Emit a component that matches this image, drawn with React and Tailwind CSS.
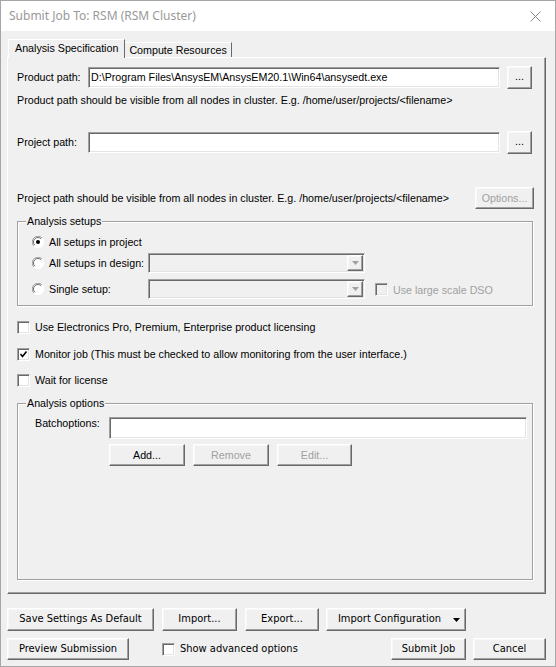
import React from "react";

// classic 3D edges
const raised =
  "bg-[#f0f0f0] border border-t-white border-l-white border-b-[#696969] border-r-[#696969] shadow-[inset_-1px_-1px_0_#a0a0a0,inset_1px_1px_0_#f8f8f8]";
const sunken =
  "border border-t-[#a0a0a0] border-l-[#a0a0a0] border-b-white border-r-white shadow-[inset_1px_1px_0_#696969,inset_-1px_-1px_0_#e3e3e3]";
const etched =
  "border border-[#a0a0a0] shadow-[inset_1px_1px_0_#ffffff,1px_1px_0_#ffffff]";

const Button = ({ children, className = "", disabled, tahoma }) => (
  <button
    className={`${raised} ${className} flex items-center justify-center ${
      disabled ? "text-[#a0a0a0]" : "text-black"
    } ${tahoma ? "font-['DejaVu_Sans_Condensed','DejaVu_Sans',sans-serif] text-[11px]" : ""}`}
  >
    {children}
  </button>
);

const Radio = ({ checked }) => (
  <svg width="12" height="12" viewBox="0 0 12 12" className="shrink-0">
    <circle cx="6" cy="6" r="5.5" fill="#ffffff" />
    <path d="M1.9 10.1 A5.6 5.6 0 0 1 10.1 1.9" fill="none" stroke="#a0a0a0" strokeWidth="1" />
    <path d="M2.8 9.2 A4.5 4.5 0 0 1 9.2 2.8" fill="none" stroke="#696969" strokeWidth="1" />
    <path d="M10.1 1.9 A5.6 5.6 0 0 1 1.9 10.1" fill="none" stroke="#ffffff" strokeWidth="1" />
    {checked && <circle cx="6" cy="6" r="2" fill="#000000" />}
  </svg>
);

const Check = ({ checked, disabled }) => (
  <div
    className={`w-[13px] h-[13px] shrink-0 ${sunken} ${
      disabled ? "bg-[#f0f0f0]" : "bg-white"
    } flex items-center justify-center`}
  >
    {checked && (
      <svg width="9" height="9" viewBox="0 0 9 9">
        <polyline points="1.5,4 3.5,6.5 7.5,1.5" fill="none" stroke="#000" strokeWidth="1.6" />
      </svg>
    )}
  </div>
);

const Combo = () => (
  <div className={`w-[217px] h-[20px] bg-[#f0f0f0] ${sunken} flex justify-end p-[1px]`}>
    <div className={`w-[16px] h-full ${raised} flex items-center justify-center`}>
      <svg width="7" height="4" viewBox="0 0 7 4">
        <polygon points="0,0 7,0 3.5,4" fill="#a0a0a0" />
      </svg>
    </div>
  </div>
);

const Group = ({ label, className = "", children }) => (
  <div className={`relative ${etched} ${className}`}>
    <span className="absolute -top-[8px] left-[8px] bg-[#f0f0f0] px-[1px] leading-[14px]">
      {label}
    </span>
    {children}
  </div>
);

export default function App() {
  return (
    <div className="w-[556px] h-[667px] border border-[#a6a6a6] bg-[#f0f0f0] flex flex-col font-['Liberation_Sans',Arial,sans-serif] text-[10.7px] text-black overflow-hidden">
      {/* title bar */}
      <div className="h-[30px] bg-white flex items-center justify-between pl-[8px] pr-[14px] shrink-0">
        <span className="font-['Noto_Sans',sans-serif] text-[12px] text-[#999999]">
          Submit Job To: RSM (RSM Cluster)
        </span>
        <svg width="11" height="11" viewBox="0 0 11 11">
          <path d="M0.5 0.5 L10.5 10.5 M10.5 0.5 L0.5 10.5" stroke="#8a8a8a" strokeWidth="1" />
        </svg>
      </div>

      <div className="flex flex-col pl-[6px] pr-[9px] pt-[8px]">
        {/* tabs */}
        <div className="h-[19px] -mb-px flex items-end pl-[1px] relative z-10">
          <div className="h-[19px] px-[6px] bg-[#f0f0f0] border-t border-l border-r border-t-white border-l-white border-r-[#696969] flex items-center pb-[1px]">
            Analysis Specification
          </div>
          <div className="h-[15px] px-[4px] border-t border-r border-t-white border-r-[#696969] flex items-center mb-px mt-auto leading-none pt-[1px]">
            Compute Resources
          </div>
        </div>

        {/* tab page */}
        <div className="w-[539px] h-[537px] border border-t-white border-l-white border-b-[#696969] border-r-[#696969] shadow-[inset_-1px_-1px_0_#a0a0a0] pl-[9px] pr-[11px] flex flex-col">
          <div className="mt-[8px] h-[23px] flex items-center">
            <span className="w-[71px]">Product path:</span>
            <div className={`w-[412px] h-[21px] bg-white ${sunken} flex items-center px-[2px]`}>
              D:\Program Files\AnsysEM\AnsysEM20.1\Win64\ansysedt.exe
            </div>
            <Button className="ml-[7px] w-[25px] h-[23px] pb-[3px]">...</Button>
          </div>
          <div className="mt-[5px] h-[13px] leading-[13px] whitespace-nowrap">
            Product path should be visible from all nodes in cluster. E.g. /home/user/projects/&lt;filename&gt;
          </div>

          <div className="mt-[24px] h-[23px] flex items-center">
            <span className="w-[71px]">Project path:</span>
            <div className={`w-[412px] h-[21px] bg-white ${sunken}`} />
            <Button className="ml-[7px] w-[25px] h-[23px] pb-[3px]">...</Button>
          </div>

          <div className="mt-[33px] h-[22px] flex items-center justify-between">
            <span className="whitespace-nowrap">
              Project path should be visible from all nodes in cluster. E.g. /home/user/projects/&lt;filename&gt;
            </span>
            <Button disabled className="w-[59px] h-[22px]">
              Options...
            </Button>
          </div>

          <Group label="Analysis setups" className="mt-[12px] h-[85px] w-[516px]">
            <div className="pl-[14px] pt-[10px] flex flex-col">
              <div className="h-[20px] flex items-center gap-[5px]">
                <Radio checked />
                <span>All setups in project</span>
              </div>
              <div className="mt-[1px] h-[20px] flex items-center">
                <div className="w-[116px] flex items-center gap-[5px]">
                  <Radio />
                  <span>All setups in design:</span>
                </div>
                <Combo />
              </div>
              <div className="mt-[6px] h-[20px] flex items-center">
                <div className="w-[116px] flex items-center gap-[5px]">
                  <Radio />
                  <span>Single setup:</span>
                </div>
                <Combo />
                <div className="ml-[10px] flex items-center gap-[5px] pt-[2px]">
                  <Check disabled />
                  <span className="text-[#a0a0a0]">Use large scale DSO</span>
                </div>
              </div>
            </div>
          </Group>

          <div className="mt-[11px] h-[20px] flex items-center gap-[5px]">
            <Check />
            <span>Use Electronics Pro, Premium, Enterprise product licensing</span>
          </div>
          <div className="mt-[7px] h-[20px] flex items-center gap-[5px]">
            <Check checked />
            <span>Monitor job (This must be checked to allow monitoring from the user interface.)</span>
          </div>
          <div className="mt-[6px] h-[20px] flex items-center gap-[5px]">
            <Check />
            <span>Wait for license</span>
          </div>

          <Group label="Analysis options" className="mt-[13px] h-[177px] w-[516px]">
            <div className="pl-[17px] pr-[5px] pt-[13px] flex flex-col">
              <div className="h-[22px] flex items-start">
                <span className="w-[74px] leading-[13px]">Batchoptions:</span>
                <div className={`flex-1 h-[22px] bg-white ${sunken}`} />
              </div>
              <div className="mt-[5px] pl-[74px] flex gap-[8px]">
                <Button className="w-[76px] h-[22px]">Add...</Button>
                <Button disabled className="w-[76px] h-[22px]">
                  Remove
                </Button>
                <Button disabled className="w-[75px] h-[22px]">
                  Edit...
                </Button>
              </div>
            </div>
          </Group>
        </div>

        {/* dialog buttons */}
        <div className="mt-[14px] h-[23px] flex">
          <Button tahoma className="w-[147px] h-[23px]">
            Save Settings As Default
          </Button>
          <Button tahoma className="ml-[8px] w-[75px] h-[23px]">
            Import...
          </Button>
          <Button tahoma className="ml-[8px] w-[74px] h-[23px]">
            Export...
          </Button>
          <Button tahoma className="ml-[7px] w-[140px] h-[23px] gap-[12px] pl-[6px]">
            <span>Import Configuration</span>
            <svg width="7" height="4" viewBox="0 0 7 4">
              <polygon points="0,0 7,0 3.5,4" fill="#000000" />
            </svg>
          </Button>
        </div>
        <div className="mt-[7px] h-[22px] flex items-center font-['DejaVu_Sans_Condensed','DejaVu_Sans',sans-serif] text-[11px]">
          <Button tahoma className="w-[122px] h-[22px]">
            Preview Submission
          </Button>
          <div className="ml-[33px] flex items-center gap-[5px]">
            <Check />
            <span>Show advanced options</span>
          </div>
          <Button tahoma className="ml-auto w-[75px] h-[22px]">
            Submit Job
          </Button>
          <Button tahoma className="ml-[7px] w-[73px] h-[22px]">
            Cancel
          </Button>
        </div>
      </div>
    </div>
  );
}
